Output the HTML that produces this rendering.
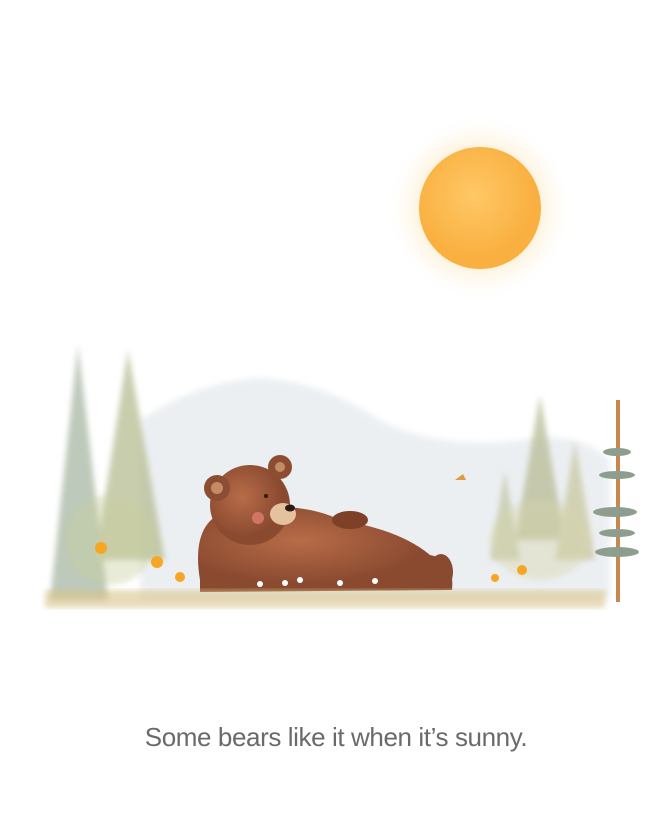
<!DOCTYPE html>
<html><head><style>
html,body{margin:0;padding:0;background:#fff;width:672px;height:816px;overflow:hidden}
.t{position:absolute;top:722px;left:0;width:672px;text-align:center;font-family:"Liberation Sans",sans-serif;font-size:26px;color:#6a6a6a;letter-spacing:-0.4px}
</style></head><body>
<svg width="672" height="816" style="position:absolute;left:0;top:0">
<defs>
<radialGradient id="glow"><stop offset="0.5" stop-color="#fde2b0" stop-opacity="0.8"/><stop offset="1" stop-color="#fff" stop-opacity="0"/></radialGradient>
<radialGradient id="sun" cx="0.45" cy="0.4"><stop offset="0" stop-color="#ffc866"/><stop offset="1" stop-color="#f9b040"/></radialGradient>
<radialGradient id="bear" cx="0.4" cy="0.4"><stop offset="0" stop-color="#b86c48"/><stop offset="1" stop-color="#8a4a30"/></radialGradient>
<filter id="b"><feGaussianBlur stdDeviation="3"/></filter>
</defs>
<circle cx="480" cy="208" r="95" fill="url(#glow)"/>
<circle cx="480" cy="208" r="61" fill="url(#sun)"/>
<path d="M140 420 Q200 380 260 378 Q320 380 380 420 Q440 450 520 440 Q580 430 610 460 L610 600 L140 600Z" fill="#e8ecef" opacity="0.8" filter="url(#b)"/>
<g fill="#a8b7a3" opacity="0.75" filter="url(#b)">
<path d="M78 345 L50 600 L108 600Z"/>
<path d="M128 350 L95 560 L165 560Z" fill="#b6bd93"/>
<path d="M540 395 L515 540 L565 540Z" fill="#b8bc95"/>
<path d="M575 440 L555 560 L595 560Z" fill="#c9c8a3"/>
<path d="M505 470 L490 560 L520 560Z" fill="#c2c7a6"/>
</g>
<ellipse cx="110" cy="540" rx="45" ry="45" fill="#c8cf9c" opacity="0.4" filter="url(#b)"/>
<ellipse cx="540" cy="540" rx="50" ry="40" fill="#d6d5a8" opacity="0.4" filter="url(#b)"/>
<rect x="616" y="400" width="4" height="202" fill="#c98750"/>
<g fill="#8e9e8e"><ellipse cx="617" cy="452" rx="14" ry="4"/><ellipse cx="617" cy="475" rx="18" ry="4"/><ellipse cx="615" cy="512" rx="22" ry="5"/><ellipse cx="617" cy="533" rx="18" ry="4"/><ellipse cx="617" cy="552" rx="22" ry="5"/></g>
<path d="M200 580 Q190 520 230 510 Q300 500 340 520 Q400 530 430 555 Q455 560 452 590 L200 592Z" fill="url(#bear)"/>
<ellipse cx="350" cy="520" rx="18" ry="9" fill="#7e4128"/>
<circle cx="250" cy="505" r="40" fill="url(#bear)"/>
<circle cx="217" cy="488" r="13" fill="#8d4d32"/><circle cx="280" cy="467" r="12" fill="#8d4d32"/>
<circle cx="217" cy="488" r="6" fill="#c58a66"/><circle cx="280" cy="467" r="5" fill="#c58a66"/>
<ellipse cx="283" cy="514" rx="13" ry="11" fill="#e4c2a0"/>
<ellipse cx="290" cy="508" rx="5" ry="3.5" fill="#2b1a12"/>
<circle cx="266" cy="496" r="2" fill="#2b1a12"/>
<circle cx="258" cy="518" r="6" fill="#e7837a" opacity="0.7"/>
<ellipse cx="441" cy="572" rx="12" ry="18" fill="#8a4a30"/>
<rect x="45" y="590" width="560" height="18" fill="#d9c48a" opacity="0.6" filter="url(#b)"/>
<g fill="#f6a623"><circle cx="101" cy="548" r="6"/><circle cx="157" cy="562" r="6"/><circle cx="180" cy="577" r="5"/><circle cx="522" cy="570" r="5"/><circle cx="495" cy="578" r="4"/></g>
<g fill="#fff"><circle cx="285" cy="583" r="3"/><circle cx="300" cy="580" r="3"/><circle cx="340" cy="583" r="3"/><circle cx="375" cy="581" r="3"/><circle cx="260" cy="584" r="3"/></g>
<path d="M455 480 l8 -6 l3 6 z" fill="#e09a40"/>
</svg>
<div class="t">Some bears like it when it’s sunny.</div>
</body></html>
